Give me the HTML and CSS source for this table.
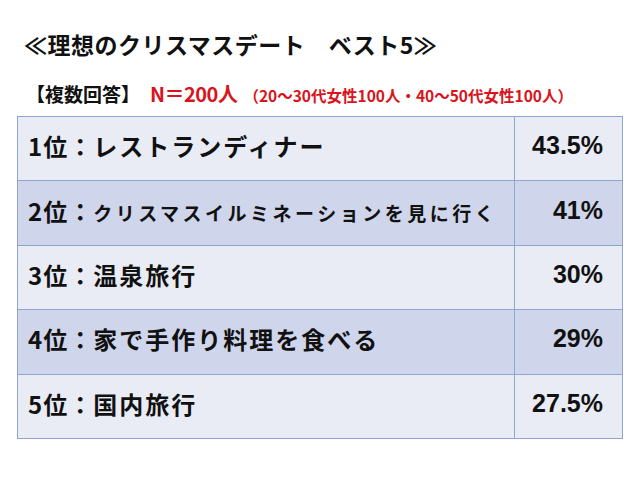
FILE: index.html
```html
<!DOCTYPE html>
<html lang="ja">
<head>
<meta charset="utf-8">
<link rel="stylesheet" href="styles.css">
</head>
<body>
<div class="page">
  <h1 class="title">≪理想のクリスマスデート　ベスト5≫</h1>
  <p class="sub"><span class="multi">【複数回答】</span><span class="n">N＝200人</span><span class="detail">（20～30代女性100人・40～50代女性100人）</span></p>
  <table class="rank">
    <colgroup><col class="c1"><col class="c2"></colgroup>
    <tr class="light"><td class="item"><span class="pos">1位：</span>レストランディナー</td><td class="pct">43.5%</td></tr>
    <tr class="dark"><td class="item"><span class="pos">2位：</span><span class="small">クリスマスイルミネーションを見に行く</span></td><td class="pct">41%</td></tr>
    <tr class="light"><td class="item"><span class="pos">3位：</span>温泉旅行</td><td class="pct">30%</td></tr>
    <tr class="dark"><td class="item"><span class="pos">4位：</span>家で手作り料理を食べる</td><td class="pct">29%</td></tr>
    <tr class="light"><td class="item"><span class="pos">5位：</span>国内旅行</td><td class="pct">27.5%</td></tr>
  </table>
</div>
</body>
</html>
```
FILE: styles.css
```css
html, body {
  margin: 0;
  padding: 0;
  background: #ffffff;
}
.page {
  width: 640px;
  height: 480px;
  padding-top: 29px;
  box-sizing: border-box;
  font-family: "Noto Sans CJK JP", sans-serif;
  color: #111;
}
.title {
  margin: 0 0 0 24px;
  font-size: 23px;
  line-height: 30px;
  font-weight: 700;
  letter-spacing: 0.5px;
}
.sub {
  margin: 21px 0 0 26px;
  line-height: 28px;
  font-weight: 700;
  display: flex;
  align-items: baseline;
}
.multi {
  font-size: 19px;
  color: #111;
  margin-right: 10px;
}
.n {
  font-size: 20px;
  color: #d9141c;
  letter-spacing: -0.5px;
  margin-right: 6px;
}
.detail {
  font-size: 15.5px;
  color: #d9141c;
  font-weight: 600;
}
.rank {
  margin: 7px 0 0 17px;
  width: 606px;
  border-collapse: collapse;
  table-layout: fixed;
}
.c1 { width: 497px; }
.rank td {
  height: 64.4px;
  padding: 0 0 6px 0;
  box-sizing: border-box;
  border: 1px solid #8fa6d0;
  font-weight: 700;
}
.light td { background: #e9ebf5; }
.dark td { background: #cfd5ea; }
.item {
  padding-left: 10px !important;
  font-size: 24px;
  letter-spacing: 2px;
  white-space: nowrap;
}
.pos {
  letter-spacing: 1px;
}
.small {
  font-size: 19px;
  letter-spacing: 3.5px;
}
.pct {
  text-align: right;
  padding-right: 19px !important;
  font-family: "Liberation Sans", sans-serif;
  font-size: 25px;
}
```
